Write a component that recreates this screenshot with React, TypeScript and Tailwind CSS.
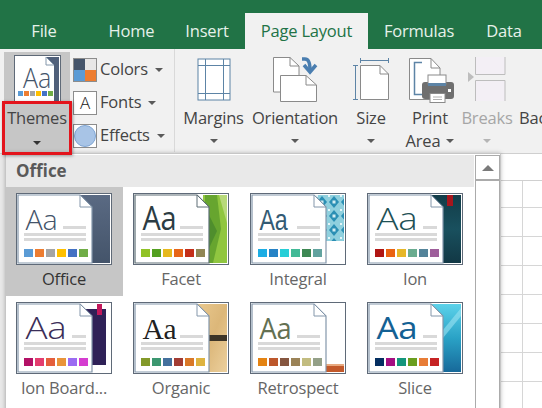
import React from "react";

const FONT = "[font-family:'Open_Sans','Noto_Sans',sans-serif]";

function Caret({ color = "border-t-[#5a5a5a]" }: { color?: string }) {
  return <span className={`inline-block w-0 h-0 border-x-[4px] border-t-[4px] border-x-transparent ${color}`} />;
}

type Theme = {
  name: string;
  aa: string;
  family: string;
  weight?: number;
  size: number;
  width: number;
  short: number;
  swatches: string[];
  art: React.ReactNode;
  pageStroke?: string;
};

const THEMES: Theme[] = [
  {
    name: "Office", aa: "#44546a", family: "Open Sans", weight: 300, size: 28, width: 32, short: 47,
    swatches: ["#5b9bd5", "#ed7d31", "#a5a5a5", "#ffc000", "#4472c4", "#70ad47"],
    art: (<>
      <defs><linearGradient id="of" x1="0" y1="0" x2="0" y2="1"><stop offset="0" stopColor="#5a6a83" /><stop offset="1" stopColor="#44546a" /></linearGradient></defs>
      <rect x="64" y="2" width="30" height="68" fill="url(#of)" />
    </>),
  },
  {
    name: "Facet", aa: "#2c3c43", family: "Open Sans", weight: 500, size: 32, width: 34, short: 47, pageStroke: "#5e6f76",
    swatches: ["#90c226", "#54a021", "#e6b91e", "#e76618", "#c42f1a", "#918655"],
    art: (<>
      <rect x="70" y="2" width="24" height="68" fill="#90c640" />
      <polygon points="72,2 84,2 88,36 80,70 72,70" fill="#67a52f" />
      <polygon points="86,2 94,2 94,30" fill="#b7d97a" />
      <polygon points="72,14 84,38 72,64" fill="#4f8e2d" />
    </>),
  },
  {
    name: "Integral", aa: "#335b74", family: "Liberation Sans", size: 30, width: 28, short: 47,
    swatches: ["#1cade4", "#2683c6", "#27ced7", "#42ba97", "#3e8853", "#62a39f"],
    art: (<>
      <defs>
        <pattern id="ig" width="12" height="14" patternUnits="userSpaceOnUse" x="66" y="2">
          <rect width="12" height="14" fill="#8fd0de" />
          <polygon points="6,1 11,7 6,13 1,7" fill="#2a8fb4" />
          <rect x="4.5" y="5.5" width="3" height="3" fill="#d3eef3" />
          <rect x="0" y="0" width="2" height="2" fill="#e3f5f8" />
        </pattern>
      </defs>
      <rect x="66" y="2" width="28" height="46" fill="url(#ig)" />
    </>),
  },
  {
    name: "Ion", aa: "#1e5155", family: "Open Sans", weight: 300, size: 32, width: 41, short: 56,
    swatches: ["#b01513", "#ea6312", "#e6b729", "#6aac90", "#54849a", "#9e5e9b"],
    art: (<>
      <defs><linearGradient id="io" x1="0" y1="0" x2="0" y2="1"><stop offset="0" stopColor="#123c48" /><stop offset="0.5" stopColor="#19505e" /><stop offset="1" stopColor="#123845" /></linearGradient></defs>
      <rect x="64" y="2" width="30" height="68" fill="url(#io)" />
      <rect x="80" y="2" width="6" height="11" fill="#a5161d" />
    </>),
  },
  {
    name: "Ion Board...", aa: "#3b2e58", family: "Open Sans", weight: 300, size: 31, width: 41, short: 56,
    swatches: ["#b31166", "#e33d6f", "#e45f3c", "#e9943a", "#9b6bf2", "#d53dd0"],
    art: (<>
      <rect x="70" y="7" width="20" height="56" fill="#2f2157" />
      <rect x="81" y="2" width="5" height="11" fill="#c2185b" />
    </>),
  },
  {
    name: "Organic", aa: "#212121", family: "Liberation Serif", size: 30, width: 34, short: 47,
    swatches: ["#83992a", "#3c9770", "#44709d", "#a23c33", "#d97828", "#deb340"],
    art: (<>
      <defs><linearGradient id="og" x1="0" y1="0" x2="1" y2="1"><stop offset="0" stopColor="#e9c88e" /><stop offset="0.5" stopColor="#dcb779" /><stop offset="1" stopColor="#ecd09e" /></linearGradient></defs>
      <rect x="64" y="2" width="30" height="68" fill="url(#og)" />
      <rect x="64" y="33" width="30" height="6" fill="#3d3527" />
    </>),
  },
  {
    name: "Retrospect", aa: "#637052", family: "Open Sans", weight: 400, size: 30, width: 32, short: 47,
    swatches: ["#e48312", "#bd582c", "#865640", "#9b8357", "#c2bc80", "#94a088"],
    art: (<>
      <rect x="72" y="62" width="22" height="2" fill="#e8a97f" />
      <rect x="72" y="64" width="22" height="6" fill="#c2592b" />
    </>),
  },
  {
    name: "Slice", aa: "#146194", family: "Open Sans", weight: 400, size: 31, width: 41, short: 56,
    swatches: ["#052f61", "#a50e82", "#14967c", "#6a9e1f", "#e87d37", "#c62324"],
    art: (<>
      <defs><linearGradient id="sl" x1="0" y1="0" x2="0" y2="1"><stop offset="0" stopColor="#5cd2ea" /><stop offset="0.5" stopColor="#2aa2c6" /><stop offset="1" stopColor="#17699a" /></linearGradient></defs>
      <rect x="64" y="2" width="30" height="68" fill="url(#sl)" />
      <polygon points="94,6 94,14 76,36 76,28" fill="#9be3f1" opacity="0.6" />
    </>),
  },
];

function Thumb({ t }: { t: Theme }) {
  const stroke = t.pageStroke ?? "#8497ab";
  return (
    <svg width="96" height="72" viewBox="0 0 96 72" className="block shrink-0">
      <rect x="0.5" y="0.5" width="95" height="71" fill="#ffffff" stroke="#5f6a78" />
      {t.art}
      <polygon points="2,2 64,2 76,14 76,70 2,70" fill="#ffffff" stroke={stroke} strokeWidth="1.2" />
      <polygon points="64,2 76,14 64,14" fill="#ffffff" stroke={stroke} strokeWidth="1" />
      <text x="9.5" y="37" fontFamily={`'${t.family}', sans-serif`} fontWeight={t.weight ?? 400} fontSize={t.size} fill={t.aa} textLength={t.width} lengthAdjust="spacingAndGlyphs">Aa</text>
      <rect x={t.short} y="33" width={70 - t.short} height="3" fill="#d9d9d9" />
      <rect x="8" y="40" width="62" height="3" fill="#d9d9d9" />
      <rect x="8" y="45" width="62" height="3" fill="#d9d9d9" />
      {t.swatches.map((c, i) => (
        <rect key={c} x={8 + i * 11} y="56" width="9" height="8" fill={c} />
      ))}
    </svg>
  );
}

function ThemesIcon() {
  return (
    <svg width="47" height="46" viewBox="0 0 47 46" className="block">
      <rect x="0.5" y="0.5" width="46" height="46" fill="#ffffff" stroke="#5f6a78" />
      <rect x="32" y="2" width="13" height="44" fill="#50607a" />
      <polygon points="2,2 32,2 40,10 40,46 2,46" fill="#ffffff" />
      <polygon points="32,2 40,10 32,10" fill="#ffffff" stroke="#8497ab" strokeWidth="1" />
      <text x="9" y="33" fontFamily="'Open Sans', sans-serif" fontWeight={300} fontSize="28" fill="#44546a" textLength="28" lengthAdjust="spacingAndGlyphs">Aa</text>
      {["#5b9bd5", "#ed7d31", "#a5a5a5", "#ffc000", "#4472c4", "#70ad47"].map((c, i) => (
        <rect key={c} x={4 + i * 6} y="36" width="5" height="5" fill={c} />
      ))}
    </svg>
  );
}

function ColorsIcon() {
  return (
    <svg width="24" height="24" viewBox="0 0 24 24" className="block">
      <rect x="0" y="0" width="12" height="12" fill="#44546a" />
      <rect x="12" y="0" width="12" height="12" fill="#e7e6e6" />
      <rect x="0" y="12" width="12" height="12" fill="#5b9bd5" />
      <rect x="12" y="12" width="12" height="12" fill="#ed7d31" />
      <rect x="0.5" y="0.5" width="23" height="23" fill="none" stroke="#8c8c8c" />
    </svg>
  );
}

function FontsIcon() {
  return (
    <div className="w-[24px] h-[24px] bg-white border border-[#8c8c8c] flex items-center justify-center text-[17px] leading-none text-[#222] font-light [font-family:'Open_Sans',sans-serif]">A</div>
  );
}

function EffectsIcon() {
  return (
    <svg width="24" height="24" viewBox="0 0 24 24" className="block">
      <rect x="0.5" y="0.5" width="23" height="23" fill="#ffffff" stroke="#8c8c8c" />
      <circle cx="12" cy="12" r="10.5" fill="#a8c4e6" stroke="#7fa5d3" />
    </svg>
  );
}

function MarginsIcon() {
  return (
    <svg width="34" height="44" viewBox="0 0 34 44" className="block">
      <rect x="1" y="1" width="32" height="41" fill="#ffffff" stroke="#5d84a6" />
      <path d="M1 7.5H33M1 35.5H33M8.5 1V42M26.5 1V42" stroke="#5d84a6" fill="none" />
    </svg>
  );
}

function OrientationIcon() {
  return (
    <svg width="48" height="48" viewBox="0 0 48 48" className="block">
      <path d="M2.5 2.5H19L28 11V37H2.5Z" fill="#ffffff" stroke="#8a8a8a" />
      <path d="M19 2.5V11H28" fill="none" stroke="#8a8a8a" />
      <path d="M9.5 20.5H35L45.5 30V46.5H9.5Z" fill="#ffffff" stroke="#8a8a8a" />
      <path d="M35 20.5V30H45.5" fill="none" stroke="#8a8a8a" />
      <path d="M31 4H34C38 4 39 8 39 15" fill="none" stroke="#4a7eb0" strokeWidth="3.5" />
      <path d="M33 10L39 17L45 10" fill="none" stroke="#4a7eb0" strokeWidth="3.5" />
    </svg>
  );
}

function SizeIcon() {
  return (
    <svg width="40" height="46" viewBox="0 0 40 46" className="block">
      <path d="M9.5 9.5H29L37.5 18V43.5H9.5Z" fill="#ffffff" stroke="#8a8a8a" />
      <path d="M29 9.5V18H37.5" fill="none" stroke="#8a8a8a" />
      <path d="M9 4.5H38M9.5 2V7M37.5 2V7" fill="none" stroke="#5d84a6" />
      <path d="M4.5 9V43M2 9.5H7M2 43.5H7" fill="none" stroke="#5d84a6" />
    </svg>
  );
}

function PrintIcon() {
  return (
    <svg width="48" height="48" viewBox="0 0 48 48" className="block">
      <path d="M1.5 2.5H23L32 12V43.5H1.5Z" fill="#ffffff" stroke="#8a8a8a" />
      <path d="M23 2.5V12H32" fill="none" stroke="#8a8a8a" />
      <path d="M14 6.5H6.5V38.5H14" fill="none" stroke="#5d84a6" strokeWidth="1.5" />
      <rect x="14" y="26" width="32" height="17" rx="3" fill="#6f6f6f" />
      <rect x="20" y="19" width="18" height="9" fill="#ffffff" stroke="#8a8a8a" />
      <rect x="20" y="27" width="18" height="3" fill="#5d84a6" />
      <rect x="22" y="37.5" width="15" height="9" fill="#ffffff" stroke="#8a8a8a" />
      <path d="M25 41H34M25 43.5H34" stroke="#b0b0b0" />
      <rect x="40" y="33" width="3" height="3" fill="#ffffff" />
    </svg>
  );
}

function BreaksIcon() {
  return (
    <svg width="44" height="46" viewBox="0 0 44 46" className="block">
      <polygon points="3,16 9,21 3,26" fill="#bdbdbd" />
      <path d="M10.5 1V18.5H40V1" fill="#f3eff5" stroke="#bdbdbd" />
      <path d="M10.5 45V24.5H40V45" fill="#f3eff5" stroke="#bdbdbd" />
    </svg>
  );
}

function SmallItem({ icon, label }: { icon: React.ReactNode; label: string }) {
  return (
    <div className="flex items-center h-[33px]">
      {icon}
      <span className="ml-[3px] text-[#444]">{label}</span>
      <span className="ml-[7px] flex"><Caret /></span>
    </div>
  );
}

function BigButton({ w, pt, icon, label, second, disabled }: { w: string; pt: string; icon: React.ReactNode; label: string; second?: string; disabled?: boolean }) {
  const col = disabled ? "text-[#a6a6a6]" : "text-[#444]";
  return (
    <div className={`${w} shrink-0 flex flex-col items-center`}>
      <div className={`h-[57px] w-full flex justify-center ${pt}`}>{icon}</div>
      <div className={`h-[24px] leading-[24px] whitespace-nowrap ${col}`}>{label}</div>
      <div className="h-[21px] flex items-center justify-center gap-[6px]">
        {second && <span className={`pt-[2px] ${col}`}>{second}</span>}
        <Caret color={disabled ? "border-t-[#b5b5b5]" : "border-t-[#5a5a5a]"} />
      </div>
    </div>
  );
}

export default function App() {
  return (
    <div className={`relative w-[542px] h-[408px] overflow-hidden bg-white text-[16.5px] tracking-[-0.2px] ${FONT} flex flex-col`}>
      <div className="h-[49px] bg-[#217346] flex items-end text-[#e6f1ea] shrink-0">
        <div className="w-[88px] h-[36px] leading-[36px] text-center">File</div>
        <div className="w-[87px] h-[36px] leading-[36px] text-center">Home</div>
        <div className="w-[64px] h-[36px] leading-[36px] text-center">Insert</div>
        <div className="ml-[6px] w-[123px] h-[36px] leading-[36px] text-center bg-[#f1f1f1] text-[#217346]">Page Layout</div>
        <div className="w-[102px] h-[36px] leading-[36px] text-center">Formulas</div>
        <div className="w-[68px] h-[36px] leading-[36px] text-center">Data</div>
      </div>

      <div className="h-[105px] bg-[#f1f1f1] border-b border-[#cfcfcf] flex shrink-0 overflow-hidden">
        <div className="ml-[4px] mt-[3px] w-[66px] bg-[#c6c6c6] flex flex-col items-center shrink-0">
          <div className="h-[49px] pt-[3px]"><ThemesIcon /></div>
          <div className="h-[33px] leading-[33px] text-[#444]">Themes</div>
          <div className="flex items-center h-[18px]"><Caret color="border-t-[#333]" /></div>
        </div>
        <div className="ml-[3px] w-[102px] pt-[4px] border-r border-[#d9d9d9] shrink-0 mb-[1px]">
          <SmallItem icon={<ColorsIcon />} label="Colors" />
          <SmallItem icon={<FontsIcon />} label="Fonts" />
          <SmallItem icon={<EffectsIcon />} label="Effects" />
        </div>
        <BigButton w="w-[77px]" pt="pt-[9px]" icon={<MarginsIcon />} label="Margins" />
        <BigButton w="w-[86px]" pt="pt-[6px]" icon={<OrientationIcon />} label="Orientation" />
        <BigButton w="w-[66px]" pt="pt-[7px]" icon={<SizeIcon />} label="Size" />
        <BigButton w="w-[52px]" pt="pt-[7px] pl-[4px]" icon={<PrintIcon />} label="Print" second="Area" />
        <BigButton w="w-[62px]" pt="pt-[7px]" icon={<BreaksIcon />} label="Breaks" disabled />
        <div className="ml-[1px] pt-[57px] leading-[24px] text-[#444] whitespace-nowrap">Background</div>
      </div>

      <div className="flex-1 flex">
        <div className="w-[5px] bg-[#e9e9e9] shrink-0" />
        <div className="flex-1 bg-[linear-gradient(#d6d6d6_1px,transparent_1px),linear-gradient(90deg,#d6d6d6_1px,transparent_1px)] bg-[size:100%_29px,64px_100%] bg-[position:0_24px,5px_0]">
          <div className="h-[27px] bg-white border-b border-[#d0d0d0]" />
        </div>
      </div>

      <div className="absolute left-[5px] top-[153px] w-[496px] h-[270px] bg-white border border-[#c6c6c6] shadow-[0_0_4px_rgba(0,0,0,0.25)] flex flex-col">
        <div className="flex flex-1 pt-[1px]">
          <div className="flex-1 flex flex-col">
            <div className="h-[32px] bg-[#e9e9e9] pl-[10px] leading-[32px] text-[17px] font-bold tracking-normal text-[#5a5a5a]">Office</div>
            <div className="grid grid-cols-[repeat(4,117px)] auto-rows-[109px]">
              {THEMES.map((t, i) => (
                <div key={t.name} className={`pl-[10px] pt-[6px] ${i === 0 ? "bg-[#c6c6c6]" : ""}`}>
                  <div className="w-[96px] flex flex-col items-center">
                    <Thumb t={t} />
                    <div className={`mt-[3px] leading-[22px] whitespace-nowrap ${i === 0 ? "text-[#333]" : "text-[#666]"}`}>{t.name}</div>
                  </div>
                </div>
              ))}
            </div>
          </div>
          <div className="w-[25px] mx-[1px] shrink-0 flex flex-col">
            <div className="h-[25px] border border-[#ababab] bg-white flex items-center justify-center">
              <span className="inline-block w-0 h-0 border-x-[6px] border-b-[6px] border-x-transparent border-b-[#7a7a7a]" />
            </div>
            <div className="flex-1 border border-[#ababab] bg-white" />
          </div>
        </div>
      </div>

      <div className="absolute left-[2px] top-[101px] w-[70px] h-[54px] border-[3px] border-[#e3141c] shadow-[1px_1px_3px_rgba(0,0,0,0.35)]" />
    </div>
  );
}
